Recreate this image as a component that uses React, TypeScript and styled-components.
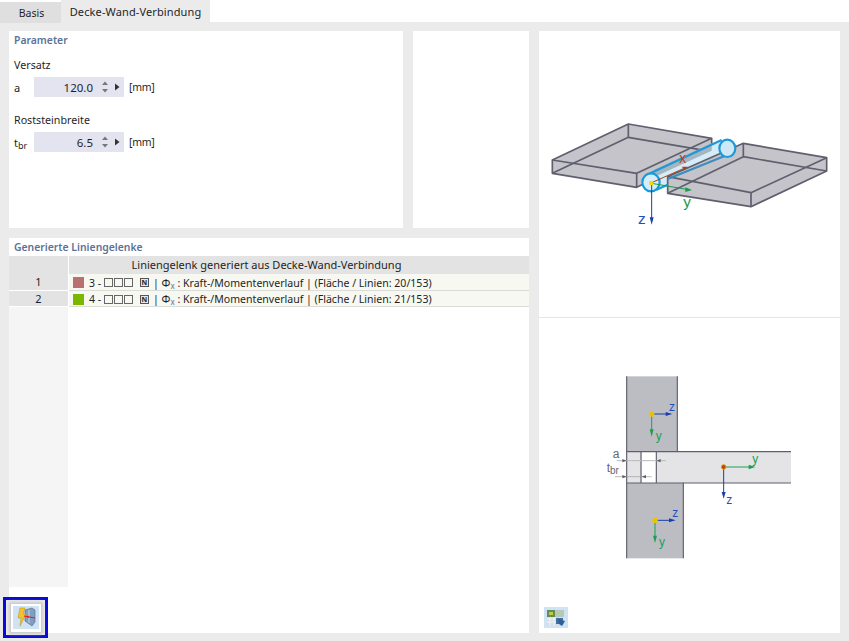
import React from "react";
import styled, { createGlobalStyle } from "styled-components";

const Global = createGlobalStyle`
  html, body { margin: 0; padding: 0; background: #fff; }
  body { font-family: "Noto Sans", "Open Sans", "Liberation Sans", sans-serif; font-size: 11px; color: #1f1f1f; }
  * { box-sizing: border-box; }
`;

const Page = styled.div`
  position: relative;
  width: 849px;
  height: 641px;
  overflow: hidden;
  display: flex;
  flex-direction: column;
`;
const TabBar = styled.div`
  display: flex;
  align-items: flex-end;
  height: 22px;
  background: #fff;
`;
const Tab = styled.div<{ $active?: boolean }>`
  height: ${(p) => (p.$active ? "22px" : "21px")};
  width: ${(p) => (p.$active ? "149px" : "61px")};
  margin-bottom: ${(p) => (p.$active ? "0" : "-1px")};
  background: ${(p) => (p.$active ? "#ebebeb" : "#dfdfdf")};
  display: flex;
  align-items: center;
  justify-content: center;
  padding-left: ${(p) => (p.$active ? "0" : "2px")};
  font-size: ${(p) => (p.$active ? "11px" : "10.5px")};
  letter-spacing: ${(p) => (p.$active ? "0.12px" : "0")};
  position: relative;
`;
const Body = styled.div`
  flex: 1;
  background: #ebebeb;
  padding: 9px 9px 8px;
  display: grid;
  grid-template-columns: 394px 116px 301px;
  grid-template-rows: 197px 395px;
  gap: 10px;
`;
const Panel = styled.section`
  background: #fff;
  display: flex;
  flex-direction: column;
  min-height: 0;
`;
const WidePanel = styled(Panel)`
  grid-column: 1 / span 2;
`;
const ViewPanel = styled(Panel)`
  grid-column: 3;
  grid-row: 1 / span 2;
`;
const Title = styled.div`
  height: 18px;
  padding: 2px 0 0 5px;
  font-size: 10.4px;
  font-weight: 600;
  color: #5d7296;
`;
const ParamBody = styled.div`
  padding: 9px 0 0 5px;
  display: flex;
  flex-direction: column;
`;
const GroupLabel = styled.div`
  height: 15px;
  line-height: 15px;
  font-size: 10.7px;
`;
const FieldRow = styled.div`
  display: flex;
  align-items: center;
  height: 20px;
  margin-top: 4px;
  margin-bottom: 16px;
`;
const Symbol = styled.div`
  width: 20px;
  font-size: 11px;
  sub { font-size: 9px; vertical-align: -2px; line-height: 0; }
`;
const Spin = styled.div`
  width: 90px;
  height: 20px;
  background: #e4e4f0;
  display: flex;
  align-items: center;
`;
const SpinValue = styled.div`
  width: 59px;
  text-align: right;
  font-size: 11.5px;
`;
const SpinArrows = styled.svg`
  margin-left: 9px;
  flex: none;
`;
const Unit = styled.div`
  margin-left: 5px;
  font-size: 10.5px;
  letter-spacing: -0.3px;
`;
const TableWrap = styled.div`
  flex: 1;
  display: grid;
  grid-template-columns: 60px 1fr;
  grid-template-rows: 18px 17px 16px 1fr;
  margin-bottom: 46px;
`;
const Corner = styled.div`
  background: #e3e3e3;
  border-right: 1px solid #fff;
`;
const Header = styled.div`
  background: #e3e3e3;
  text-align: center;
  line-height: 18px;
  font-size: 11px;
  padding-right: 65px;
`;
const RowHead = styled.div`
  background: #e3e3e3;
  border-right: 1px solid #fff;
  border-bottom: 1px solid #fff;
  text-align: center;
  line-height: 16px;
  font-size: 11px;
`;
const RowCell = styled.div`
  background: #f8f8f2;
  border-bottom: 1px solid #dcdcd6;
  display: flex;
  align-items: center;
  padding: 1px 0 0 4px;
  font-size: 10.55px;
  white-space: nowrap;
`;
const Swatch = styled.span<{ $color: string }>`
  width: 11px;
  height: 11px;
  background: ${(p) => p.$color};
  margin-right: 5px;
  flex: none;
`;
const Tofu = styled.span`
  width: 9px;
  height: 9px;
  border: 1px solid #666;
  margin-right: 1px;
  flex: none;
`;
const NBox = styled.span`
  width: 9px;
  height: 9px;
  margin: 0 4px 0 6px;
  border: 1px solid #555;
  background: #e6e6e6;
  font-size: 7px;
  line-height: 7px;
  text-align: center;
  font-weight: 700;
  flex: none;
`;
const Phi = styled.span`
  sub { font-size: 8px; line-height: 0; vertical-align: -2px; color: #5d7296; }
`;
const Gutter = styled.div`
  background: #f5f5f5;
  border-right: 1px solid #fff;
`;
const ViewTop = styled.div`
  height: 287px;
  border-bottom: 1px solid #e6e6e6;
  padding: 79px 0 0 1px;
`;
const ViewBottom = styled.div`
  flex: 1;
  padding: 51px 0 0 51px;
  position: relative;
`;
const IconButton = styled.div`
  position: absolute;
  left: 5px;
  bottom: 5px;
  width: 24px;
  height: 21px;
  background: #cfe3f5;
  display: flex;
  align-items: center;
  justify-content: center;
`;
const Highlight = styled.div`
  position: absolute;
  left: 3px;
  top: 597px;
  width: 45px;
  height: 41px;
  border: 3px solid #0a0ad8;
  background: #ebebeb;
  display: flex;
  align-items: center;
  justify-content: center;
`;
const HighlightInner = styled.div`
  width: 30px;
  height: 28px;
  background: #fff;
  box-shadow: 0 0 3px 2px #c8c8c8;
  display: flex;
  align-items: center;
  justify-content: center;
`;
const HighlightIcon = styled.div`
  width: 26px;
  height: 23px;
  background: #cfe3f5;
  display: flex;
  align-items: center;
  justify-content: center;
`;
const Drawing = styled.svg`
  display: block;
`;

const Arrows = () => (
  <SpinArrows width="21" height="14" viewBox="0 0 21 14">
    <path d="M0 5 L3 1.5 L6 5 Z" fill="#777" />
    <path d="M0 9 L3 12.5 L6 9 Z" fill="#777" />
    <path d="M13 3.5 L17.5 7 L13 10.5 Z" fill="#333" />
  </SpinArrows>
);

const Field = ({ sym, value }: { sym: React.ReactNode; value: string }) => (
  <FieldRow>
    <Symbol>{sym}</Symbol>
    <Spin>
      <SpinValue>{value}</SpinValue>
      <Arrows />
    </Spin>
    <Unit>[mm]</Unit>
  </FieldRow>
);

const Row = ({ n, color, id, l }: { n: number; color: string; id: number; l: number }) => (
  <>
    <RowHead>{n}</RowHead>
    <RowCell>
      <Swatch $color={color} />
      {id}&nbsp;-&nbsp;
      <Tofu />
      <Tofu />
      <Tofu />
      <NBox>N</NBox>|&nbsp;
      <Phi>
        Φ<sub>x</sub>
      </Phi>
      &nbsp;: Kraft-/Momentenverlauf | (Fläche / Linien: {l}/153)
    </RowCell>
  </>
);

const stroke = "#5f5f6e";
const Slabs = () => (
  <Drawing width="300" height="130" viewBox="0 0 900 390">
    <g fill="#c4c4ca" stroke={stroke} strokeWidth="5" strokeLinejoin="round">
      <polygon points="37,150 265,42 515,85 515,125 290,232 37,190" />
      <polyline points="37,190 265,82 515,125" fill="none" />
      <polyline points="37,150 290,190 515,85" fill="none" />
      <line x1="265" y1="42" x2="265" y2="82" />
      <line x1="290" y1="190" x2="290" y2="232" />
    </g>
    <polygon points="318,195 545,90 580,135 345,240" fill="#d5edf9" />
    <polygon points="345,200 515,122 515,100 340,180" fill="#a8b4be" />
    <g fill="#c4c4ca" stroke={stroke} strokeWidth="5" strokeLinejoin="round">
      <polygon points="383,200 610,100 860,143 860,183 633,290 383,250" />
      <polyline points="383,250 610,140 860,183" fill="none" />
      <polyline points="383,200 633,248 860,143" fill="none" />
      <line x1="610" y1="100" x2="610" y2="140" />
      <line x1="633" y1="248" x2="633" y2="290" />
    </g>
    <g fill="none" stroke="#1a9ad8" strokeWidth="6.5">
      <line x1="318" y1="196" x2="545" y2="90" />
      <line x1="348" y1="240" x2="383" y2="224" />
      <line x1="385" y1="206" x2="578" y2="128" stroke="#3a8fc0" />
      <ellipse cx="562" cy="115" rx="24" ry="26" fill="#cfe8f6" />
      <ellipse cx="333" cy="217" rx="26" ry="27" fill="#d5edf9" />
    </g>
    <line x1="335" y1="218" x2="432" y2="175" stroke="#b04020" strokeWidth="3" />
    <path d="M445 170 L426 170 L432 180 Z" fill="#b04020" />
    <text x="417" y="160" fontSize="44" fill="#c0401c" fontFamily="Liberation Sans, sans-serif">x</text>
    <line x1="335" y1="220" x2="440" y2="238" stroke="#1a9a50" strokeWidth="3" />
    <path d="M456 240 L436 232 L436 246 Z" fill="#1a9a50" />
    <text x="430" y="292" fontSize="46" fill="#1a9a50" fontFamily="Liberation Sans, sans-serif">y</text>
    <line x1="335" y1="220" x2="335" y2="330" stroke="#1a3fa8" strokeWidth="3" />
    <path d="M335 344 L329 322 L341 322 Z" fill="#1a3fa8" />
    <text x="294" y="342" fontSize="46" fill="#2050c0" fontFamily="Liberation Sans, sans-serif">z</text>
    <circle cx="334" cy="219" r="7" fill="#f4d800" />
  </Drawing>
);

const Axes = ({ x, y, c, zr, labelYFirst }: { x: number; y: number; c: string; zr: number; labelYFirst?: boolean }) =>
  labelYFirst ? (
    <g fontFamily="Liberation Sans, sans-serif" fontSize="36">
      <line x1={x} y1={y} x2={x + 85} y2={y} stroke="#1aa055" strokeWidth="3" />
      <path d={`M${x + 95} ${y} L${x + 75} ${y - 7} L${x + 75} ${y + 7} Z`} fill="#1aa055" />
      <text x={x + 86} y={y - 12} fill="#1aa055">y</text>
      <line x1={x} y1={y} x2={x} y2={y + 80} stroke="#1a3fa8" strokeWidth="3" />
      <path d={`M${x} ${y + 95} L${x - 6} ${y + 75} L${x + 6} ${y + 75} Z`} fill="#1a3fa8" />
      <text x={x + 8} y={y + 110} fill="#2050c0">z</text>
      <circle cx={x} cy={y} r="7" fill={c} stroke="#e0a000" strokeWidth="3" />
    </g>
  ) : (
    <g fontFamily="Liberation Sans, sans-serif" fontSize="36">
      <line x1={x} y1={y} x2={x + zr} y2={y} stroke="#1a3fa8" strokeWidth="3" />
      <path d={`M${x + zr + 12} ${y} L${x + zr - 8} ${y - 6} L${x + zr - 8} ${y + 6} Z`} fill="#1a3fa8" />
      <text x={x + zr + 2} y={y - 9} fill="#2050c0">z</text>
      <line x1={x} y1={y} x2={x} y2={y + 52} stroke="#1aa055" strokeWidth="3" />
      <path d={`M${x} ${y + 68} L${x - 6} ${y + 46} L${x + 6} ${y + 46} Z`} fill="#1aa055" />
      <text x={x + 12} y={y + 78} fill="#1aa055">y</text>
      <circle cx={x} cy={y} r="7" fill={c} stroke="#f0c800" strokeWidth="3" />
    </g>
  );

const Section = () => (
  <Drawing width="220" height="190" viewBox="0 0 660 570">
    <rect x="110" y="22" width="152" height="226" fill="#bcbcc3" />
    <rect x="110" y="342" width="170" height="226" fill="#bcbcc3" />
    <rect x="110" y="248" width="493" height="94" fill="#e4e4e6" />
    <rect x="155" y="248" width="44" height="94" fill="#fff" />
    <g stroke={stroke} strokeWidth="3.5" fill="none">
      <polyline points="110,22 110,568" />
      <polyline points="262,22 262,248 603,248" />
      <polyline points="280,568 280,342 603,342" />
      <line x1="110" y1="248" x2="262" y2="248" />
      <line x1="110" y1="342" x2="280" y2="342" />
      <line x1="153" y1="248" x2="153" y2="342" />
      <line x1="199" y1="248" x2="199" y2="342" />
    </g>
    <line x1="80" y1="275" x2="228" y2="275" stroke="#b8b8be" strokeWidth="3" />
    <line x1="75" y1="323" x2="185" y2="323" stroke="#9a9aa0" strokeWidth="2" />
    <g fill="#5f5f68">
      <path d="M110 275 L97 270 L97 280 Z" />
      <path d="M199 275 L212 270 L212 280 Z" />
      <path d="M110 323 L97 318 L97 328 Z" />
      <path d="M155 323 L168 318 L168 328 Z" />
    </g>
    <g fontFamily="Liberation Sans, sans-serif" fill="#66666e">
      <text x="68" y="268" fontSize="36">a</text>
      <text x="50" y="308" fontSize="36">t</text>
      <text x="60" y="316" fontSize="30">br</text>
    </g>
    <Axes x={185} y={135} c="#e8c000" zr={50} />
    <Axes x={195} y={454} c="#e8c000" zr={50} />
    <Axes x={401} y={294} c="#c04010" zr={0} labelYFirst />
  </Drawing>
);

const BoltIcon = () => (
  <svg width="22" height="21" viewBox="0 0 22 21">
    <path d="M10 3 L17 1 L20 3 L20 15 L17 19 L10 14 Z" fill="#7f9fc0" stroke="#50688a" strokeWidth="0.6" />
    <path d="M14 3 L14 16" stroke="#c8d6e6" strokeWidth="1" />
    <path d="M5 1 L10 1 L8 7 L11 7 L5 19 L6 11 L3 11 Z" fill="#f2c230" stroke="#c89a10" strokeWidth="0.6" />
    <path d="M9 9 L20 11" stroke="#e02020" strokeWidth="1.2" />
    <circle cx="13" cy="9.8" r="1" fill="#e02020" />
  </svg>
);

const ViewIcon = () => (
  <svg width="20" height="18" viewBox="0 0 20 18">
    <rect x="1" y="1" width="8" height="7" fill="#5f8f55" />
    <rect x="3" y="3" width="4" height="3" fill="#c8c840" />
    <rect x="9" y="1" width="9" height="7" fill="#b8c8b8" />
    <rect x="1" y="8" width="12" height="9" fill="#d8dde4" />
    <path d="M1 10 H13 M1 13 H13 M4 8 V17 M8 8 V17" stroke="#f2f4f8" strokeWidth="1" />
    <rect x="10" y="9" width="7" height="6" fill="#3f6f9f" />
    <path d="M12 10 L19 12 L16 17 L13 15 Z" fill="#2f5f95" />
  </svg>
);

export default function App() {
  return (
    <Page>
      <Global />
      <TabBar>
        <Tab>Basis</Tab>
        <Tab $active>Decke-Wand-Verbindung</Tab>
      </TabBar>
      <Body>
        <Panel>
          <Title>Parameter</Title>
          <ParamBody>
            <GroupLabel>Versatz</GroupLabel>
            <Field sym="a" value="120.0" />
            <GroupLabel>Roststeinbreite</GroupLabel>
            <Field
              sym={
                <>
                  t<sub>br</sub>
                </>
              }
              value="6.5"
            />
          </ParamBody>
        </Panel>
        <Panel />
        <ViewPanel>
          <ViewTop>
            <Slabs />
          </ViewTop>
          <ViewBottom>
            <Section />
            <IconButton>
              <ViewIcon />
            </IconButton>
          </ViewBottom>
        </ViewPanel>
        <WidePanel>
          <Title>Generierte Liniengelenke</Title>
          <TableWrap>
            <Corner />
            <Header>Liniengelenk generiert aus Decke-Wand-Verbindung</Header>
            <Row n={1} color="#b87070" id={3} l={20} />
            <Row n={2} color="#7ab800" id={4} l={21} />
            <Gutter />
          </TableWrap>
        </WidePanel>
      </Body>
      <Highlight>
        <HighlightInner>
          <HighlightIcon>
            <BoltIcon />
          </HighlightIcon>
        </HighlightInner>
      </Highlight>
    </Page>
  );
}
